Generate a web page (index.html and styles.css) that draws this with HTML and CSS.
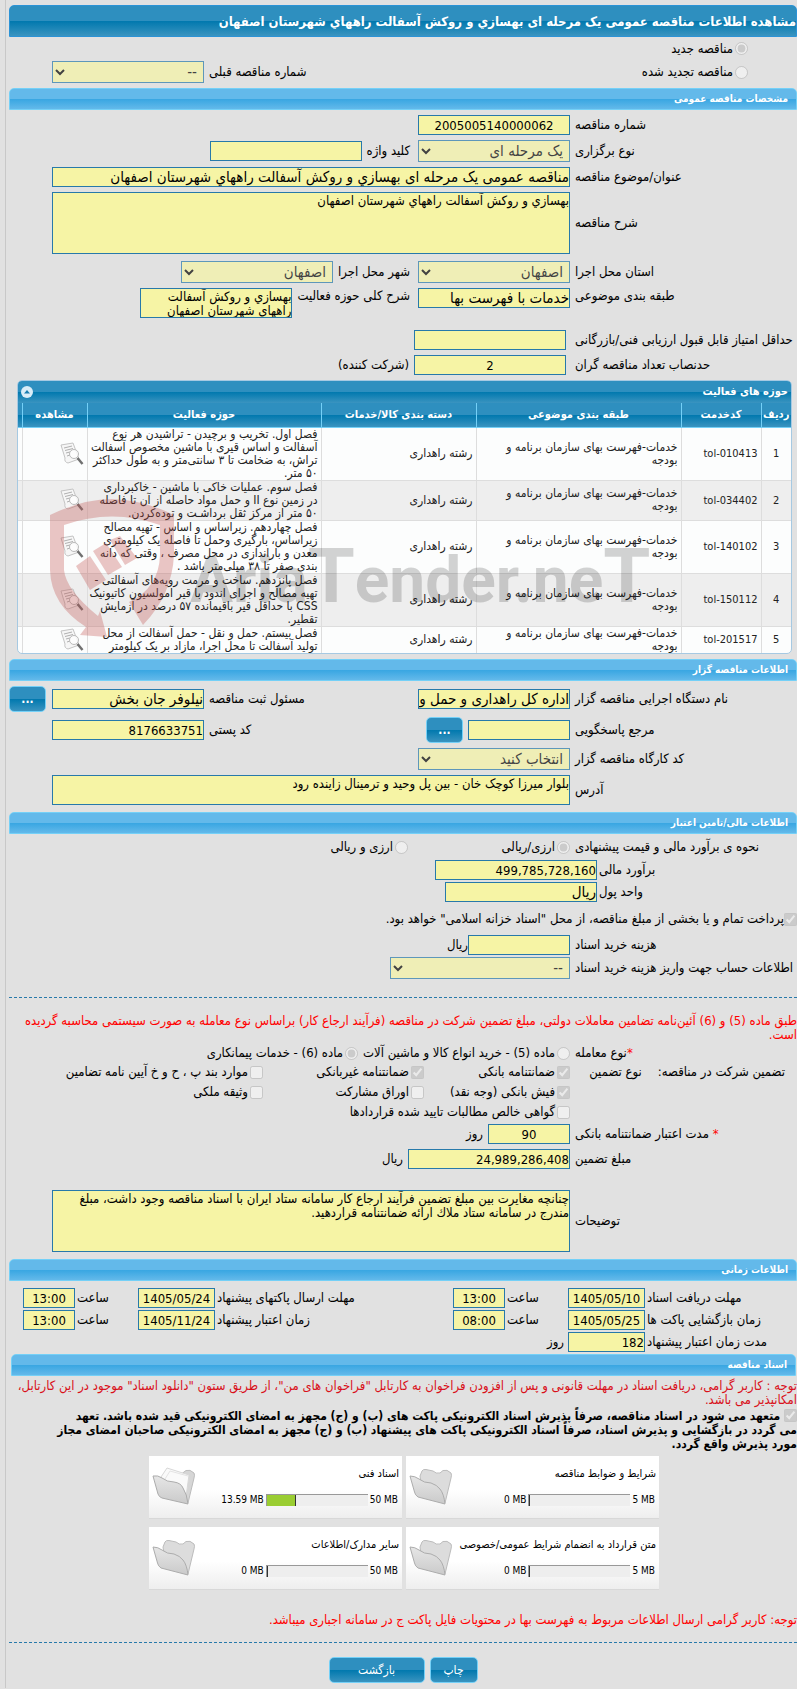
FILE: index.html
```html
<!DOCTYPE html>
<html lang="fa" dir="rtl">
<head>
    <meta charset="UTF-8">
    <meta name="viewport" content="width=device-width, initial-scale=1.0">
    <title>مشاهده اطلاعات مناقصه عمومی</title>
    <link rel="stylesheet" href="styles.css">
</head>
<body>
    <!-- shared drawings -->
    <svg class="defs" width="0" height="0" aria-hidden="true">
        <defs>
            <linearGradient id="folderFill" x1="0" y1="0" x2="0" y2="1">
                <stop offset="0" stop-color="#e6e6e6"/>
                <stop offset="1" stop-color="#cacaca"/>
            </linearGradient>
        </defs>
        <symbol id="folder" viewBox="0 0 44 40">
            <path d="M11 9 L13 4 Q14 2 17 2.500 L24 4 Q27 7 31 6 L34 3.500 Q38 2 42 6 Q43 8 42 11 L36 36 L14 28 Z" fill="#dcdcdc" stroke="#bcbcbc"/>
            <path d="M1 9 Q6 9 10 12 Q15 16 22 16 Q28 18 31 22 Q35 27 36 37 L9 30 Q6 28 5.500 25 Z" fill="url(#folderFill)" stroke="#acacac" stroke-linejoin="round"/>
        </symbol>
        <symbol id="folderFull" viewBox="0 0 44 40">
            <path d="M11 14 L28 8 L34 3.500 Q38 2 42 6 Q43 8 42 11 L36 36 L14 28 Z" fill="#d6d6d6" stroke="#bcbcbc"/>
            <path d="M9 10 L15 1 L37 8 L34 30 L14 25 Z" fill="#fafafa" stroke="#d8d8d8"/>
            <path d="M13 12 L18 4 L36 9" fill="none" stroke="#e4e4e4"/>
            <path d="M1 9 Q6 8 10 11 Q15 15 22 15 Q29 16 31 21 Q35 27 36 37 L10 31 Q7 30 6 27 Z" fill="url(#folderFill)" stroke="#acacac" stroke-linejoin="round"/>
        </symbol>
        <symbol id="preview" viewBox="0 0 24 24">
            <path d="M1 3 L13 1 L19 17 L8 21 Q4 20 5 16 Z" fill="#f6f6f6" stroke="#c4c4c4"/>
            <path d="M4 6 L12 4 M5 8.500 L13 6.500 M6 11 L10 10 M7 14 L10 13" stroke="#b0b0b0"/>
            <circle cx="14" cy="12" r="4.500" fill="#fff" fill-opacity=".8" stroke="#bababa"/>
            <path d="M17.500 16 L22.500 22" stroke="#707070" stroke-width="2.500"/>
        </symbol>
    </svg>

    <main class="page">
        <h1 class="page-title">مشاهده اطلاعات مناقصه عمومی یک مرحله ای بهسازي و روکش آسفالت راههاي شهرستان اصفهان</h1>

        <div class="kind">
            <label class="kind-row"><input type="radio" name="kind" checked disabled>مناقصه جدید</label>
            <div class="kind-row">
                <label><input type="radio" name="kind" disabled>مناقصه تجدید شده</label>
                <div class="side">
                    <label for="prevNo">شماره مناقصه قبلی</label>
                    <select id="prevNo" class="w-std" disabled><option>--</option></select>
                </div>
            </div>
        </div>

        <h2 class="section-title">مشخصات مناقصه عمومی</h2>
        <div class="form">
            <div class="row">
                <label class="lbl" for="tenderNo">شماره مناقصه</label>
                <input type="text" id="tenderNo" class="w-std digits center" value="2005005140000062" readonly>
            </div>
            <div class="row">
                <label class="lbl" for="holdType">نوع برگزاری</label>
                <select id="holdType" class="w-std" disabled><option>یک مرحله ای</option></select>
                <label class="lbl-next" for="keyword">کلید واژه</label>
                <input type="text" id="keyword" class="w-std" readonly>
            </div>
            <div class="row">
                <label class="lbl" for="subject">عنوان/موضوع مناقصه</label>
                <input type="text" id="subject" class="grow" value="مناقصه عمومی یک مرحله ای بهسازي و روکش آسفالت راههاي شهرستان اصفهان" readonly>
            </div>
            <div class="row">
                <label class="lbl" for="desc">شرح مناقصه</label>
                <textarea id="desc" class="grow tall" readonly>بهسازي و روکش آسفالت راههاي شهرستان اصفهان</textarea>
            </div>
            <div class="row row-gap-sm">
                <label class="lbl" for="province">استان محل اجرا</label>
                <select id="province" class="w-std" disabled><option>اصفهان</option></select>
                <label class="lbl-next" for="city">شهر محل اجرا</label>
                <select id="city" class="w-std" disabled><option>اصفهان</option></select>
            </div>
            <div class="row row-top">
                <label class="lbl" for="category">طبقه بندی موضوعی</label>
                <input type="text" id="category" class="w-std" value="خدمات با فهرست بها" readonly>
                <label class="lbl-next" for="scope">شرح کلی حوزه فعالیت</label>
                <textarea id="scope" class="w-std short" readonly>بهسازي و روکش آسفالت راههاي شهرستان اصفهان</textarea>
            </div>
            <div class="row row-gap-md">
                <label class="lbl" for="minScore">حداقل امتیاز قابل قبول ارزیابی فنی/بازرگانی</label>
                <input type="text" id="minScore" class="w-std indent" readonly>
            </div>
            <div class="row">
                <label class="lbl" for="quorum">حدنصاب تعداد مناقصه گران</label>
                <input type="text" id="quorum" class="w-std indent digits center" value="2" readonly>
                <span>(شرکت کننده)</span>
            </div>
        </div>

        <div class="grid-box">
            <div class="grid-caption">
                <span>حوزه های فعالیت</span>
                <button type="button" class="collapse" aria-label="بستن">
                    <svg width="12" height="12" viewBox="0 0 12 12"><circle cx="6" cy="6" r="6" fill="#d9edf8"/><path d="M3 7.500 L6 4 L9 7.500 Z" fill="#1a7db0"/></svg>
                </button>
            </div>
            <div class="grid-body">
                <table>
                    <colgroup>
                        <col class="c-idx"><col class="c-code"><col class="c-cat"><col class="c-goods"><col class="c-scope"><col class="c-view"><col class="c-end">
                    </colgroup>
                    <thead>
                        <tr><th>ردیف</th><th>کدخدمت</th><th>طبقه بندی موضوعی</th><th>دسته بندی کالا/خدمات</th><th>حوزه فعالیت</th><th>مشاهده</th><th></th></tr>
                    </thead>
                    <tbody>
                        <tr class="lines-4">
                            <td class="num">1</td><td class="code">tol-010413</td>
                            <td>خدمات-فهرست بهای سازمان برنامه و<br>بودجه</td><td>رشته راهداری</td>
                            <td>فصل اول. تخریب و برچیدن - تراشیدن هر نوع<br>آسفالت و اساس قیری با ماشین مخصوص آسفالت<br>تراش، به ضخامت تا ۳ سانتی‌متر و به طول حداکثر<br>۵۰ متر.</td>
                            <td class="view"><svg width="24" height="24"><use href="#preview"/></svg></td><td></td>
                        </tr>
                        <tr class="lines-3">
                            <td class="num">2</td><td class="code">tol-034402</td>
                            <td>خدمات-فهرست بهای سازمان برنامه و<br>بودجه</td><td>رشته راهداری</td>
                            <td>فصل سوم. عملیات خاکی با ماشین - خاکبرداری<br>در زمین نوع II و حمل مواد حاصله از آن تا فاصله<br>۵۰ متر از مرکز ثقل برداشـت و توده‌کردن.</td>
                            <td class="view"><svg width="24" height="24"><use href="#preview"/></svg></td><td></td>
                        </tr>
                        <tr class="lines-4">
                            <td class="num">3</td><td class="code">tol-140102</td>
                            <td>خدمات-فهرست بهای سازمان برنامه و<br>بودجه</td><td>رشته راهداری</td>
                            <td>فصل چهاردهم. زیراساس و اساس - تهیه مصالح<br>زیراساس، بارگیری وحمل تا فاصله یک کیلومتری<br>معدن و باراندازی در محل مصرف ، وقتی که دانه<br>بندی صفر تا ۳۸ میلی‌متر باشد .</td>
                            <td class="view"><svg width="24" height="24"><use href="#preview"/></svg></td><td></td>
                        </tr>
                        <tr class="lines-4">
                            <td class="num">4</td><td class="code">tol-150112</td>
                            <td>خدمات-فهرست بهای سازمان برنامه و<br>بودجه</td><td>رشته راهداری</td>
                            <td>فصل پانزدهم. ساخت و مرمت رویه‌های آسفالتی -<br>تهیه مصالح و اجرای اندود با قیر امولسیون کاتیونیک<br>CSS با حداقل قیر باقیمانده ۵۷ درصد در آزمایش<br>تقطیر.</td>
                            <td class="view"><svg width="24" height="24"><use href="#preview"/></svg></td><td></td>
                        </tr>
                        <tr class="lines-2">
                            <td class="num">5</td><td class="code">tol-201517</td>
                            <td>خدمات-فهرست بهای سازمان برنامه و<br>بودجه</td><td>رشته راهداری</td>
                            <td>فصل بیستم. حمل و نقل - حمل آسفالت از محل<br>تولید آسفالت تا محل اجرا، مازاد بر یک کیلومتر</td>
                            <td class="view"><svg width="24" height="24"><use href="#preview"/></svg></td><td></td>
                        </tr>
                    </tbody>
                </table>
            </div>
            <svg class="watermark" viewBox="0 0 640 150" direction="ltr" aria-hidden="true">
                <g fill="#c0504d" fill-opacity=".32">
                    <path d="M2 23 Q35 7 64 7 Q96 8 126 23 V63 Q124 103 95 133 L81 110 Q111 96 112 63 V33 Q64 16 16 33 V78 Q18 98 50 124 L52 119 L59 145 L32 143 L38 135 Q3 113 2 78 Z"/>
                    <path d="M28 74 L42 64 L58 88 L42 98 Z M45 59 L58 51 L74 75 L60 83 Z M62 48 L72 44 L89 66 L77 73 Z"/>
                </g>
                <text x="142" y="110">Aria<tspan class="tall-t">T</tspan>ender.ne<tspan class="tall-t">T</tspan></text>
            </svg>
        </div>

        <h2 class="section-title">اطلاعات مناقصه گزار</h2>
        <div class="form">
            <div class="row">
                <label class="lbl" for="org">نام دستگاه اجرایی مناقصه گزار</label>
                <input type="text" id="org" class="w-std" value="اداره کل راهداری و حمل و نقل جاده ای" readonly>
                <div class="side side-more">
                    <label for="registrar">مسئول ثبت مناقصه</label>
                    <input type="text" id="registrar" class="w-std" value="نیلوفر جان بخش" readonly>
                    <button type="button" class="btn btn-more">...</button>
                </div>
            </div>
            <div class="row">
                <label class="lbl" for="contact">مرجع پاسخگویی</label>
                <input type="text" id="contact" class="w-sm" readonly>
                <button type="button" class="btn btn-more">...</button>
                <div class="side">
                    <label for="postal">کد پستی</label>
                    <input type="text" id="postal" class="w-std digits" value="8176633751" readonly>
                </div>
            </div>
            <div class="row">
                <label class="lbl" for="workshop">کد کارگاه مناقصه گزار</label>
                <select id="workshop" class="w-std" disabled><option>انتخاب کنید</option></select>
            </div>
            <div class="row">
                <label class="lbl" for="address">آدرس</label>
                <textarea id="address" class="grow short" readonly>بلوار میرزا کوچک خان - بین پل وحید و ترمینال زاینده رود</textarea>
            </div>
        </div>

        <h2 class="section-title section-gap">اطلاعات مالی/تامین اعتبار</h2>
        <div class="form">
            <div class="row row-radio">
                <span class="lbl">نحوه ی برآورد مالی و قیمت پیشنهادی</span>
                <label class="opt opt-wide"><input type="radio" name="currency" checked disabled>ارزی/ریالی</label>
                <label class="opt"><input type="radio" name="currency" disabled>ارزی و ریالی</label>
            </div>
            <div class="tight">
                <div class="row">
                    <label class="lbl lbl-short" for="estimate">برآورد مالی</label>
                    <input type="text" id="estimate" class="w-lg digits" value="499,785,728,160" readonly>
                </div>
                <div class="row">
                    <label class="lbl lbl-short" for="unit">واحد پول</label>
                    <input type="text" id="unit" class="w-std" value="ریال" readonly>
                </div>
            </div>
            <label class="row row-check"><input type="checkbox" checked disabled>پرداخت تمام و یا بخشی از مبلغ مناقصه، از محل "اسناد خزانه اسلامی" خواهد بود.</label>
            <div class="tight">
                <div class="row">
                    <label class="lbl" for="docFee">هزینه خرید اسناد</label>
                    <div class="joined">
                        <input type="text" id="docFee" class="w-sm" readonly>
                        <span>ریال</span>
                    </div>
                </div>
                <div class="row">
                    <label class="lbl" for="account">اطلاعات حساب جهت واریز هزینه خرید اسناد</label>
                    <select id="account" class="w-xl" disabled><option>--</option></select>
                </div>
            </div>
        </div>

        <hr class="dash">

        <p class="note">طبق ماده (5) و (6) آئین‌نامه تضامین معاملات دولتی، مبلغ تضمین شرکت در مناقصه (فرآیند ارجاع کار) براساس نوع معامله به صورت سیستمی محاسبه گردیده است.</p>
        <div class="guarantee">
            <div class="row">
                <span class="lbl"><span class="req">*</span>نوع معامله</span>
                <label class="opt"><input type="radio" name="deal" disabled>ماده (5) - خرید انواع کالا و ماشین آلات</label>
                <label class="opt"><input type="radio" name="deal" checked disabled>ماده (6) - خدمات پیمانکاری</label>
            </div>
            <div class="checks">
                <span class="checks-title">تضمین شرکت در مناقصه:</span>
                <span>نوع تضمین</span>
                <div class="checks-list">
                    <label class="opt"><input type="checkbox" checked disabled>ضمانتنامه بانکی</label>
                    <label class="opt"><input type="checkbox" checked disabled>ضمانتنامه غیربانکی</label>
                    <label class="opt"><input type="checkbox" disabled>موارد بند پ ، ح و خ آیین نامه تضامین</label>
                    <label class="opt"><input type="checkbox" checked disabled>فیش بانکی (وجه نقد)</label>
                    <label class="opt"><input type="checkbox" disabled>اوراق مشارکت</label>
                    <label class="opt"><input type="checkbox" disabled>وثیقه ملکی</label>
                    <label class="opt opt-full"><input type="checkbox" disabled>گواهی خالص مطالبات تایید شده قراردادها</label>
                </div>
            </div>
        </div>
        <div class="form form-flush">
            <div class="row">
                <label class="lbl" for="validity"><span class="req">*</span> مدت اعتبار ضمانتنامه بانکی</label>
                <input type="text" id="validity" class="w-xs digits center" value="90" readonly>
                <span>روز</span>
            </div>
            <div class="row">
                <label class="lbl" for="amount">مبلغ تضمین</label>
                <input type="text" id="amount" class="w-lg digits" value="24,989,286,408" readonly>
                <span>ریال</span>
            </div>
            <div class="row row-gap-lg">
                <label class="lbl" for="remarks">توضیحات</label>
                <textarea id="remarks" class="grow tall" readonly>چنانچه مغایرت بین مبلغ تضمین فرآیند ارجاع کار سامانه ستاد ایران با اسناد مناقصه وجود داشت، مبلغ
مندرج در سامانه ستاد ملاك ارائه ضمانتنامه قراردهید.</textarea>
            </div>
        </div>

        <h2 class="section-title section-gap">اطلاعات زمانی</h2>
        <div class="times">
            <label for="d1">مهلت دریافت اسناد</label><input type="text" id="d1" class="digits center" value="1405/05/10" readonly>
            <label for="h1">ساعت</label><input type="text" id="h1" class="digits center" value="13:00" readonly>
            <label for="d2">مهلت ارسال پاکتهای پیشنهاد</label><input type="text" id="d2" class="digits center" value="1405/05/24" readonly>
            <label for="h2">ساعت</label><input type="text" id="h2" class="digits center" value="13:00" readonly>
            <label for="d3">زمان بازگشایی پاکت ها</label><input type="text" id="d3" class="digits center" value="1405/05/25" readonly>
            <label for="h3">ساعت</label><input type="text" id="h3" class="digits center" value="08:00" readonly>
            <label for="d4">زمان اعتبار پیشنهاد</label><input type="text" id="d4" class="digits center" value="1405/11/24" readonly>
            <label for="h4">ساعت</label><input type="text" id="h4" class="digits center" value="13:00" readonly>
            <label for="d5">مدت زمان اعتبار پیشنهاد</label><input type="text" id="d5" class="digits" value="182" readonly>
            <span class="day">روز</span>
        </div>

        <h2 class="section-title docs-title">اسناد مناقصه</h2>
        <p class="note note-dark">توجه : کاربر گرامی، دریافت اسناد در مهلت قانونی و پس از افزودن فراخوان به کارتابل "فراخوان های من"، از طریق ستون "دانلود اسناد" موجود در این کارتابل، امکانپذیر می باشد.</p>
        <label class="pledge"><input type="checkbox" checked disabled> متعهد می شود در اسناد مناقصه، صرفاً پذیرش اسناد الکترونیکی پاکت های (ب) و (ج) مجهز به امضای الکترونیکی قید شده باشد. تعهد<br>می گردد در بازگشایی و پذیرش اسناد، صرفاً اسناد الکترونیکی پاکت های پیشنهاد (ب) و (ج) مجهز به امضای الکترونیکی صاحبان امضای مجاز<br>مورد پذیرش واقع گردد.</label>

        <div class="docs">
            <div class="doc">
                <div class="doc-info">
                    <div class="doc-name">شرایط و ضوابط مناقصه</div>
                    <div class="usage"><span>5 MB</span><div class="bar"><div class="bar-fill" style="width: 0%"></div></div><span>0 MB</span></div>
                </div>
                <svg width="44" height="40"><use href="#folder"/></svg>
            </div>
            <div class="doc">
                <div class="doc-info">
                    <div class="doc-name">اسناد فنی</div>
                    <div class="usage"><span>50 MB</span><div class="bar"><div class="bar-fill" style="width: 28%"></div></div><span>13.59 MB</span></div>
                </div>
                <svg width="44" height="40"><use href="#folderFull"/></svg>
            </div>
            <div class="doc">
                <div class="doc-info">
                    <div class="doc-name">متن قرارداد به انضمام شرایط عمومی/خصوصی</div>
                    <div class="usage"><span>5 MB</span><div class="bar"><div class="bar-fill" style="width: 0%"></div></div><span>0 MB</span></div>
                </div>
                <svg width="44" height="40"><use href="#folder"/></svg>
            </div>
            <div class="doc">
                <div class="doc-info">
                    <div class="doc-name">سایر مدارک/اطلاعات</div>
                    <div class="usage"><span>50 MB</span><div class="bar"><div class="bar-fill" style="width: 0%"></div></div><span>0 MB</span></div>
                </div>
                <svg width="44" height="40"><use href="#folder"/></svg>
            </div>
        </div>

        <p class="note">توجه: کاربر گرامی ارسال اطلاعات مربوط به فهرست بها در محتویات فایل پاکت ج در سامانه اجباری میباشد.</p>
        <hr class="dash dash-last">
        <div class="actions">
            <button type="button" class="btn btn-print">چاپ</button>
            <button type="button" class="btn btn-back">بازگشت</button>
        </div>
    </main>
</body>
</html>
```
FILE: styles.css
```css
:root {
    --blue-border: #2779aa;
    --sky: #74d0f7;
    --field: #f6f4a5;
    --bg: #e1e1e1;
    --dark-bar: linear-gradient(#2e8fbf 0, #2e8fbf 50%, #0078ae 50%, #3a94c0 100%);
    --light-bar: linear-gradient(#63b9ea 0, #63b9ea 50%, #38a6e2 50%, #63b9ea 100%);
}

* {
    box-sizing: border-box;
}

body {
    margin: 0 0 0 5px;
    border-left: 1px solid #c8c8c8;
    background: var(--bg);
    color: #000;
    font-family: Tahoma, "DejaVu Sans Condensed", "DejaVu Sans", sans-serif;
    font-size: 13px;
    line-height: 14px;
}

.defs {
    position: absolute;
}

.page {
    padding: 5px 0 5px 3px;
    overflow: hidden;
}

h1, h2, p {
    margin: 0;
}

/* bars */
.page-title {
    height: 32px;
    border: 1px solid #2b93d6;
    border-radius: 5px 5px 0 0;
    background: var(--dark-bar);
    color: #fff;
    font-size: 13px;
    line-height: 32px;
    white-space: nowrap;
}

.section-title {
    height: 22px;
    padding: 0 8px;
    border: 1px solid var(--sky);
    border-radius: 5px 5px 0 0;
    background: var(--light-bar);
    color: #fff;
    font-size: 10px;
    line-height: 20px;
}

.section-gap {
    margin-top: 7px;
}

/* controls */
input, select, textarea, button {
    font-family: inherit;
    font-size: 15px;
    margin: 0;
}

input[type="text"], select, textarea {
    border: 1px solid var(--blue-border);
    border-radius: 0;
    background-color: var(--field);
    color: #000;
    outline: none;
}

input[type="text"] {
    height: 20px;
    padding: 0;
}

.digits {
    font-size: 13px;
}

select {
    height: 22px;
    padding: 0 2px;
}

select:disabled {
    opacity: .7;
}

textarea {
    display: block;
    padding: 1px 0;
    font-size: 13px;
    line-height: 14px;
    resize: none;
    overflow: hidden;
}

input[type="radio"], input[type="checkbox"] {
    flex: none;
    width: 13px;
    height: 13px;
}

.center {
    text-align: center;
}

.tall {
    height: 62px;
}

.short {
    height: 30px;
}

.w-xs { width: 82px; }
.w-sm { width: 102px; }
.w-std { width: 152px; }
.w-lg { width: 162px; }
.w-xl { width: 180px; }

/* form rows */
.form {
    display: flex;
    flex-direction: column;
    gap: 5px;
    padding: 5px 0 0 43px;
}

.form-flush {
    padding-top: 2px;
}

.tight {
    display: flex;
    flex-direction: column;
    gap: 2px;
}

.row {
    display: flex;
    align-items: center;
    gap: 5px;
}

.row-top {
    align-items: flex-start;
}

.row-top label {
    padding-top: 1px;
}

.row-gap-sm { margin-top: 2px; }
.row-gap-md { margin-top: 7px; }
.row-gap-lg { margin-top: 16px; }

.lbl {
    flex: 0 0 222px;
    text-align: left;
    white-space: nowrap;
}

.lbl-short {
    flex-basis: 198px;
    margin-left: -3px;
}

.lbl-next {
    margin-right: 3px;
    white-space: nowrap;
}

.grow {
    flex: 1;
    min-width: 0;
}

.indent {
    margin-right: 4px;
}

.joined {
    display: flex;
    align-items: center;
}

.side {
    display: flex;
    align-items: center;
    gap: 5px;
    margin-right: auto;
}

.side-more {
    margin-left: -43px;
}

.side-more .btn {
    margin-right: 1px;
}

.opt {
    display: flex;
    align-items: center;
    gap: 2px;
    white-space: nowrap;
}

.opt-wide {
    flex: 0 0 157px;
}

.row-radio {
    height: 16px;
}

.row-check {
    height: 22px;
    margin-top: 1px;
    gap: 0;
}

.kind {
    padding: 0 49px 4px 43px;
}

.kind-row {
    display: flex;
    align-items: center;
    height: 23px;
}

.kind-row + .kind-row {
    height: 24px;
}

.kind label {
    display: flex;
    align-items: center;
    gap: 2px;
}

/* activity grid */
.grid-box {
    position: relative;
    margin: 5px 5px 5px 8px;
    border: 1px solid #a6c9e2;
    border-radius: 5px;
    background: #fcfdfd;
    overflow: hidden;
}

.grid-caption {
    display: flex;
    justify-content: space-between;
    align-items: center;
    height: 22px;
    padding: 0 3px;
    background: var(--dark-bar);
    color: #fff;
    font-size: 11px;
    font-weight: bold;
}

.collapse {
    display: flex;
    padding: 0;
    border: 0;
    background: none;
}

.grid-body {
    height: 250px;
    overflow: hidden;
}

table {
    width: 100%;
    table-layout: fixed;
    border-collapse: collapse;
    font-size: 12px;
    line-height: 13px;
}

.c-idx { width: 30px; }
.c-code { width: 80px; }
.c-cat { width: 205px; }
.c-goods { width: 155px; }
.c-view { width: 65px; }
.c-end { width: 4px; }

thead tr {
    height: 24px;
    background: var(--dark-bar);
}

th {
    padding: 0;
    border-left: 1px solid var(--sky);
    border-bottom: 1px solid var(--sky);
    color: #fff;
    font-size: 11px;
    white-space: nowrap;
}

td {
    padding: 0 3px;
    border-left: 1px solid #ddd;
    border-bottom: 1px solid #ddd;
    color: #222;
    white-space: nowrap;
}

th:last-child, td:last-child {
    padding: 0;
    border-left: 0;
}

tbody tr:nth-child(even) {
    background: #eee;
}

.lines-4 { height: 53px; }
.lines-3 { height: 40px; }
.lines-2 { height: 27px; }

.num, .code {
    font-size: 11px;
}

.num {
    text-align: center;
}

.view {
    vertical-align: middle;
}

.view svg {
    display: block;
}

.watermark {
    position: absolute;
    left: 30px;
    top: 111px;
    width: 640px;
    height: 150px;
    pointer-events: none;
}

.watermark text {
    fill: #000;
    fill-opacity: .17;
    font-family: Roboto, sans-serif;
    font-size: 64px;
    font-weight: bold;
}

.watermark .tall-t {
    font-size: 76px;
}

/* buttons */
.btn {
    height: 26px;
    padding: 0;
    border: 1px solid var(--sky);
    border-radius: 5px;
    background: var(--dark-bar);
    color: #fff;
    font-size: 12px;
}

.btn-more {
    width: 37px;
    font-weight: bold;
}

.btn-print { width: 48px; }
.btn-back { width: 96px; }

/* guarantee */
.dash {
    margin: 18px 0 16px;
    border: 0;
    border-top: 1px dashed var(--blue-border);
}

.note {
    color: #f00;
}

.req {
    color: #f00;
}

.guarantee {
    padding-top: 2px;
}

.guarantee .row {
    height: 18px;
}

.checks {
    display: flex;
    line-height: 20px;
}

.checks-title {
    margin: 0 12px 0 16px;
}

.checks-list {
    flex: 0 0 561px;
    display: grid;
    grid-template-columns: 146px 161px 1fr;
    grid-auto-rows: 20px;
    margin-right: auto;
}

.opt-full {
    grid-column: 1 / -1;
}

/* deadlines */
.times {
    display: grid;
    grid-template-columns: 150px 77px 59px 52px 234px 77px 59px 52px;
    gap: 2px;
    align-items: center;
    padding: 7px 0 2px;
    text-align: left;
    white-space: nowrap;
}

.times input[type="text"] {
    width: 100%;
}

.times #d5 {
    text-align: right;
}

.day {
    text-align: right;
    padding-right: 2px;
}

/* documents */
.docs-title {
    margin: 0 1px 0 2px;
}

.note-dark {
    padding: 3px 0 2px;
    color: #d9101a;
}

.pledge {
    display: block;
    font-size: 12px;
    font-weight: bold;
    white-space: nowrap;
}

.pledge input {
    vertical-align: top;
}

.docs {
    display: grid;
    grid-template-columns: 253px 253px;
    gap: 8px 4px;
    justify-content: center;
    padding: 5px 0 23px 2px;
}

.doc {
    display: flex;
    justify-content: space-between;
    align-items: center;
    height: 63px;
    padding: 0 3px;
    border-bottom: 1px solid #d8d8d8;
    background: linear-gradient(#fff 55%, #eee);
    font-size: 11px;
}

.doc-name {
    padding-bottom: 12px;
    white-space: nowrap;
}

.usage {
    display: flex;
    align-items: center;
    gap: 2px;
    height: 14px;
    padding-right: 1px;
    font-size: 10px;
    white-space: nowrap;
}

.usage span {
    direction: ltr;
}

.bar {
    width: 102px;
    height: 12px;
    border-top: 1px solid #999;
    border-left: 1px solid #999;
    background: #eee;
    direction: ltr;
}

.bar-fill {
    box-sizing: content-box;
    height: 11px;
    border-right: 1px solid #333;
    background: #9acd32;
}

.dash-last {
    margin: 15px 0 14px;
}

.actions {
    display: flex;
    justify-content: center;
    gap: 5px;
}
```
